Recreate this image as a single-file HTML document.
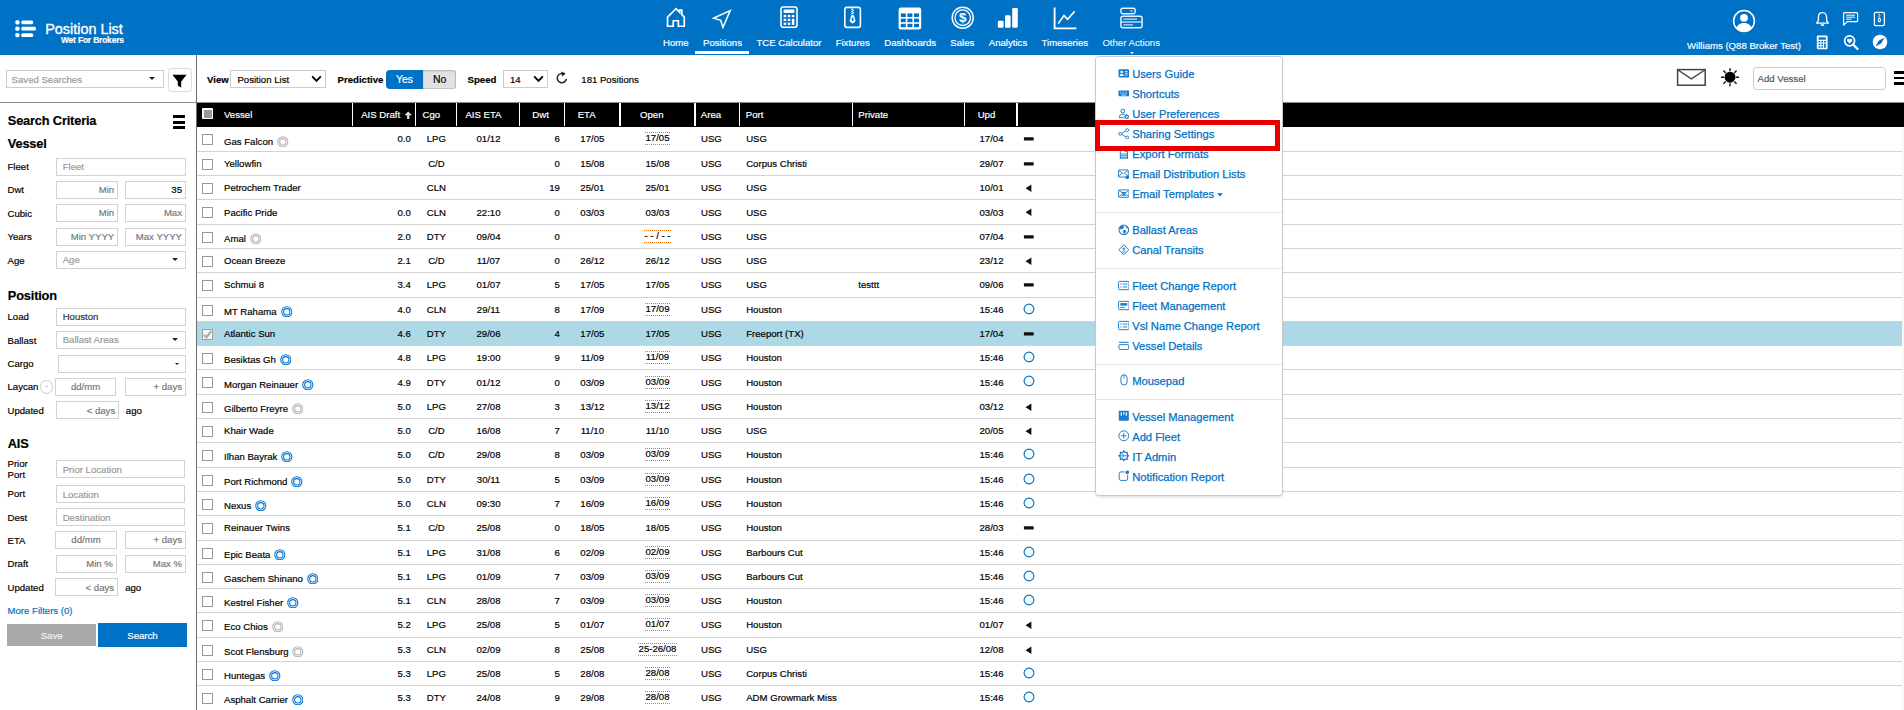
<!DOCTYPE html>
<html><head><meta charset="utf-8"><title>Position List</title>
<style>
*{box-sizing:border-box}
html,body{margin:0;padding:0}
body{width:1904px;height:710px;overflow:hidden;position:relative;background:#fff;font-family:"Liberation Sans",sans-serif;font-size:9.6px;color:#000;line-height:1;-webkit-text-stroke:0.18px}
.abs{position:absolute}
#hdr{position:absolute;left:0;top:0;width:1904px;height:55px;background:#0072c6}
.nav{position:absolute;top:0;height:55px;width:120px;margin-left:-60px;text-align:center;color:#fff}
.nav svg{position:absolute;left:50%;}
.nav span{position:absolute;left:0;width:120px;top:38px;font-size:9.6px;white-space:nowrap}
#title{position:absolute;left:45.2px;top:22.3px;color:#fff;font-size:14.4px;white-space:nowrap;letter-spacing:0px;-webkit-text-stroke:0.35px #fff}
#subtitle{position:absolute;left:61px;top:36.4px;color:#fff;font-size:8.4px;font-weight:bold;white-space:nowrap;letter-spacing:-0.15px}
#user{position:absolute;left:1644px;width:200px;top:41.1px;text-align:center;color:#fff;font-size:9.6px;white-space:nowrap}
/* toolbar */
#hline{position:absolute;left:0;top:102px;width:1904px;height:1px;background:#8c8c8c}
#vline{position:absolute;left:196px;top:55px;width:1px;height:655px;background:#6e6e6e}
.lbl{position:absolute;font-weight:bold;font-size:9.6px;white-space:nowrap}
.sel{position:absolute;border:1px solid #ccc;background:#fff;font-size:9.6px;white-space:nowrap}
/* sidebar */
.sh{position:absolute;left:7.8px;font-weight:bold;font-size:12.8px;white-space:nowrap;letter-spacing:-0.17px}
.sl{position:absolute;left:7.5px;font-size:9.6px;white-space:nowrap}
.in{position:absolute;border:1px solid #d2d2d2;background:#fff;height:17.4px;font-size:9.6px;color:#999;white-space:nowrap;line-height:15.4px;padding:0 5.5px;overflow:hidden}
.in.r{text-align:right;padding:0 2.8px;color:#777}
.in.c{text-align:center;color:#777}
.in.v{color:#000}
.caret{position:absolute;width:0;height:0;border-left:3px solid transparent;border-right:3px solid transparent;border-top:3px solid #222}
/* table */
#thead{position:absolute;left:197px;top:103px;width:1707px;height:23.6px;background:#000;color:#fff}
#thead span{position:absolute;top:6.6px;font-size:9.6px;white-space:nowrap}
#thead i{position:absolute;top:0;height:23.2px;width:1px;background:#fff}
#thead i.w{width:2px}
#rows{position:absolute;left:197px;top:127px;width:1705px}
.row{position:absolute;left:0;border-bottom:1px solid #d3d3d3;width:1705px}
.row.hl{background:#add8e6}
.row span{position:absolute;top:0;line-height:inherit;font-size:9.6px;white-space:nowrap}
.row .cb{position:absolute;left:5px;top:7px;width:11px;height:10.6px;border:1px solid #999;background:#fff;border-radius:0}
.row .v{left:27px}
.row .ad{left:155.4px;width:63px;text-align:right;padding-right:4.6px}
.row .cg{left:218.4px;width:41px;text-align:center;padding-left:1px}
.row .ae{left:259.4px;width:63.2px;text-align:center;padding-left:1px}
.row .dw{left:322.6px;width:45px;text-align:right;padding-right:4.8px}
.row .et{left:367.6px;width:54.5px;text-align:center;padding-left:1px}
.row .op{left:422.1px;width:75.8px;text-align:center;padding-left:1px}
.row .ar{left:504px}
.row .po{left:549.2px}
.row .pr{left:661.3px}
.row .up{left:767.5px;width:54px;text-align:center}
.row .op b{font-weight:normal;display:inline-block;position:relative;top:-1px;line-height:10.6px;border-top:1px dotted #ff6a00;border-bottom:1px dotted #ff6a00;padding:0 0.5px}
.row svg{position:absolute}
.row .v svg{position:static;vertical-align:-2.3px;margin-left:3.9px}
/* menu */
#menu{position:absolute;left:1095px;top:56px;width:188px;height:440px;background:#fff;border:1px solid #c9c9c9;border-radius:3.5px;box-shadow:0 2px 3px -1px rgba(0,0,0,0.15)}
#menu a{position:absolute;left:36.2px;color:#0072c6;font-size:11.2px;white-space:nowrap;text-decoration:none;-webkit-text-stroke:0.25px #0072c6}
#menu svg{position:absolute}
#menu hr{position:absolute;left:0;width:186px;height:1px;border:0;margin:0;background:#e5e5e5}
#redbox{position:absolute;left:1095px;top:120px;width:185px;height:31px;border:5px solid #e60000}
</style></head><body>
<div id="hdr">
<!-- logo list icon -->
<svg class="abs" style="left:14px;top:19px" width="24" height="20" viewBox="0 0 24 20"><g fill="#fff"><rect x="1.3" y="1.2" width="4.2" height="4.2" rx="1.6"/><rect x="1.3" y="7.6" width="4.2" height="4.2" rx="1.6"/><rect x="1.3" y="14" width="4.2" height="4.2" rx="1.6"/><rect x="7.2" y="1.4" width="12" height="3.8" rx="1.6"/><rect x="7.2" y="7.8" width="14.8" height="3.8" rx="1.6"/><rect x="7.2" y="14.2" width="12" height="3.8" rx="1.6"/></g></svg>
<div id="title">Position List</div>
<div id="subtitle">Wet For Brokers</div>

<div class="nav" style="left:675.8px"><svg style="margin-left:-10px;top:7.4px" width="20" height="21" viewBox="0 0 21 22"><path d="M10.5 1.8 L1.6 10.6 V20.2 H7.6 V14.4 H13 V20.2 H19.2 V10.6 L16.6 8 V3.2 H14.4 V5.7 Z" fill="none" stroke="#fff" stroke-width="1.75" stroke-linejoin="miter"/></svg><span>Home</span></div>
<div class="nav" style="left:722.5px"><svg style="margin-left:-11px;top:8.6px" width="20.4" height="20.4" viewBox="0 0 22 22"><path d="M19.6 1.8 L1.8 9.9 L9.4 12.2 L11.8 19.9 Z" fill="none" stroke="#fff" stroke-width="1.65" stroke-linejoin="miter"/></svg><span>Positions</span></div>
<div class="abs" style="left:695px;top:51px;width:54px;height:3px;background:#fff"></div>
<div class="nav" style="left:789px"><svg style="margin-left:-9px;top:6.3px" width="18" height="22.2" viewBox="0 0 18 23" preserveAspectRatio="none"><rect x="1" y="1" width="16" height="21" rx="2.2" fill="none" stroke="#fff" stroke-width="1.6"/><rect x="3.6" y="3.6" width="10.8" height="3.6" fill="#fff"/><g fill="#fff"><rect x="3.6" y="9.2" width="2.6" height="2.4"/><rect x="7.7" y="9.2" width="2.6" height="2.4"/><rect x="11.8" y="9.2" width="2.6" height="2.4"/><rect x="3.6" y="13.2" width="2.6" height="2.4"/><rect x="7.7" y="13.2" width="2.6" height="2.4"/><rect x="11.8" y="13.2" width="2.6" height="6.4"/><rect x="3.6" y="17.2" width="2.6" height="2.4"/><rect x="7.7" y="17.2" width="2.6" height="2.4"/></g></svg><span>TCE Calculator</span></div>
<div class="nav" style="left:852.7px"><svg style="margin-left:-9.9px;top:6.4px" width="19" height="23" viewBox="0 0 19 23"><rect x="1.8" y="1.4" width="15.6" height="20" rx="2.2" fill="none" stroke="#fff" stroke-width="1.6"/><path d="M9.6 2.2 L8.4 3.2 L10.8 4.4 L8.4 5.6 L10.8 6.8 L8.4 8 L9.6 8.8" stroke="#fff" stroke-width="1" fill="none"/><path d="M8.2 9.2 H11 L12.6 15.2 L9.6 17.8 L6.6 15.2 Z" fill="#fff"/><rect x="8.7" y="11.4" width="1.8" height="3.6" rx=".7" fill="#0072c6"/></svg><span>Fixtures</span></div>
<div class="nav" style="left:910.2px"><svg style="margin-left:-12.4px;top:6.7px" width="24" height="23" viewBox="0 0 24 23"><rect x="0.6" y="0.6" width="22.6" height="21.8" rx="2.2" fill="#fff"/><g fill="#0072c6"><rect x="2.8" y="6.4" width="5" height="3.6"/><rect x="9.4" y="6.4" width="5" height="3.6"/><rect x="16" y="6.4" width="5" height="3.6"/><rect x="2.8" y="11.6" width="5" height="3.6"/><rect x="9.4" y="11.6" width="5" height="3.6"/><rect x="16" y="11.6" width="5" height="3.6"/><rect x="2.8" y="16.8" width="5" height="3.4"/><rect x="9.4" y="16.8" width="5" height="3.4"/><rect x="16" y="16.8" width="5" height="3.4"/></g></svg><span>Dashboards</span></div>
<div class="nav" style="left:962.3px"><svg style="margin-left:-11.6px;top:6.2px" width="23.4" height="23.4" viewBox="0 0 24 24"><circle cx="12" cy="12" r="10.8" fill="none" stroke="#fff" stroke-width="1.5"/><circle cx="12" cy="12" r="8" fill="none" stroke="#fff" stroke-width="1.3"/><text x="12" y="16.9" font-family="Liberation Sans" font-size="13.6" font-weight="bold" fill="#fff" text-anchor="middle">$</text></svg><span>Sales</span></div>
<div class="nav" style="left:1008px"><svg style="margin-left:-11px;top:7px" width="22" height="22" viewBox="0 0 22 22"><g fill="#fff"><rect x="0.8" y="13.8" width="5.8" height="6.9" rx="1.2"/><rect x="8" y="8.2" width="5.6" height="12.5" rx="1.2"/><rect x="15.2" y="1" width="5.6" height="19.7" rx="1.2"/></g></svg><span>Analytics</span></div>
<div class="nav" style="left:1064.8px"><svg style="margin-left:-12px;top:6.5px" width="24" height="23" viewBox="0 0 24 23"><path d="M1.6 0.6 V21.4 H23.4" fill="none" stroke="#fff" stroke-width="1.9"/><path d="M5.2 16.6 L11 8.6 L14.6 12.4 L21.6 4.4" fill="none" stroke="#fff" stroke-width="1.6"/></svg><span>Timeseries</span></div>
<div class="nav" style="left:1131.2px"><svg style="margin-left:-12px;top:6.5px" width="24" height="23" viewBox="0 0 24 23"><g opacity=".9"><rect x="1.9" y="1.3" width="14.2" height="5.4" rx="1.7" fill="none" stroke="#fff" stroke-width="1.45"/><path d="M11.4 4 H13.6" stroke="#fff" stroke-width="1.1"/><rect x="1.9" y="9.2" width="21.2" height="11.6" rx="2" fill="none" stroke="#fff" stroke-width="1.45"/><path d="M1.9 15 H23.1" stroke="#fff" stroke-width="1.2"/><path d="M4.4 12.2 H18 M4.4 17.9 H14" stroke="#fff" stroke-width="1.2" opacity=".85"/></g></svg><span style="color:rgba(255,255,255,.88)">Other Actions</span></div>
<div class="abs" style="left:1129.6px;top:51.8px;width:0;height:0;border-left:2.2px solid transparent;border-right:2.2px solid transparent;border-top:2.2px solid #fff"></div>

<!-- user -->
<svg class="abs" style="left:1732px;top:9px" width="24" height="24" viewBox="0 0 24 24"><circle cx="12" cy="12" r="10.4" fill="none" stroke="#fff" stroke-width="1.5"/><circle cx="12" cy="8.8" r="3.9" fill="#fff"/><path d="M4.6 19.2 C5.4 15.4 8.4 14 12 14 C15.6 14 18.6 15.4 19.4 19.2 C17.6 21.4 15 22.4 12 22.4 C9 22.4 6.4 21.4 4.6 19.2 Z" fill="#fff"/></svg>
<div id="user">Williams (Q88 Broker Test)</div>
<!-- bell -->
<svg class="abs" style="left:1815px;top:11px" width="15" height="16" viewBox="0 0 15 16"><path d="M7.5 1.6 C4.6 1.6 3.4 3.8 3.4 6.4 V9.6 L1.6 12.2 H13.4 L11.6 9.6 V6.4 C11.6 3.8 10.4 1.6 7.5 1.6 Z" fill="none" stroke="#fff" stroke-width="1.3" stroke-linejoin="round"/><path d="M5.6 13.2 H9.4 A1.9 1.9 0 0 1 5.6 13.2 Z" fill="#fff"/></svg>
<!-- chat -->
<svg class="abs" style="left:1842px;top:11px" width="17" height="16" viewBox="0 0 17 16"><path d="M2.4 1.6 H14.6 A1 1 0 0 1 15.6 2.6 V9.6 A1 1 0 0 1 14.6 10.6 H5.4 L1.6 14 V2.6 A1 1 0 0 1 2.4 1.6 Z" fill="none" stroke="#fff" stroke-width="1.2" stroke-linejoin="round"/><path d="M4.2 4.2 H13 M4.2 6.2 H13 M4.2 8.2 H9.6" stroke="#fff" stroke-width="1"/></svg>
<!-- fixtures small -->
<svg class="abs" style="left:1872.6px;top:11px" width="14" height="16" viewBox="0 0 14 16"><rect x="1.4" y="1.4" width="10" height="13.2" rx="1.4" fill="none" stroke="#fff" stroke-width="1.3"/><path d="M6.4 2.6 L5.6 3.4 L7.2 4.4 L5.6 5.4 L6.4 6.2" stroke="#fff" stroke-width=".8" fill="none"/><path d="M5.5 6.6 H7.3 L8.1 10 L6.4 11.4 L4.7 10 Z" fill="#fff"/><rect x="5.9" y="7.8" width="1" height="2" fill="#0072c6"/></svg>
<!-- calc small -->
<svg class="abs" style="left:1816.4px;top:34.6px" width="13" height="15" viewBox="0 0 13 15"><rect x="0.8" y="0.5" width="10.8" height="13.8" rx="1.2" fill="#fff"/><g fill="#0072c6"><rect x="2.6" y="2.3" width="7.2" height="2.4"/><rect x="2.6" y="6" width="1.7" height="1.6"/><rect x="5.35" y="6" width="1.7" height="1.6"/><rect x="8.1" y="6" width="1.7" height="1.6"/><rect x="2.6" y="8.6" width="1.7" height="1.6"/><rect x="5.35" y="8.6" width="1.7" height="1.6"/><rect x="8.1" y="8.6" width="1.7" height="4.2"/><rect x="2.6" y="11.2" width="1.7" height="1.6"/><rect x="5.35" y="11.2" width="1.7" height="1.6"/></g></svg>
<!-- search heart -->
<svg class="abs" style="left:1843px;top:34px" width="16" height="16" viewBox="0 0 16 16"><circle cx="6.6" cy="6.8" r="5" fill="none" stroke="#fff" stroke-width="1.7"/><path d="M10.2 10.6 L14.6 15" stroke="#fff" stroke-width="2.2" stroke-linecap="round"/><path d="M6.6 9.6 L4.2 7 A1.4 1.4 0 0 1 6.6 5.4 A1.4 1.4 0 0 1 9 7 Z" fill="#fff"/></svg>
<!-- compass -->
<svg class="abs" style="left:1872px;top:34.4px" width="16" height="16" viewBox="0 0 16 16"><circle cx="8" cy="8" r="7.3" fill="#fff"/><path d="M12.4 3.4 L9.3 9.3 L3.6 12.6 L6.7 6.7 Z" fill="#0068b8"/></svg>
</div>
<div id="hline"></div><div id="vline"></div>
<!-- saved searches -->
<div class="sel" style="left:6px;top:70px;width:158px;height:18px;color:#999;line-height:17.4px;padding-left:4.6px;font-size:9.6px">Saved Searches</div>
<div class="caret" style="left:149px;top:76.6px"></div>
<div class="abs" style="left:168px;top:68px;width:24px;height:24px;border:1px solid #ddd;border-radius:3.5px;background:#fff"></div>
<svg class="abs" style="left:172.2px;top:73.6px" width="15" height="15" viewBox="0 0 15 15"><path d="M0.4 0.8 H14.6 L9.2 7.4 V13.6 L5.8 11.8 V7.4 Z" fill="#000"/></svg>

<div class="lbl" style="left:207px;top:74.6px">View</div>
<div class="sel" style="left:230px;top:70px;width:96px;height:17.8px;line-height:17.4px;padding-left:6.4px">Position List</div>
<svg class="abs" style="left:311.1px;top:75.2px" width="11" height="8" viewBox="0 0 11 8"><path d="M1.2 1.4 L5.5 5.8 L9.8 1.4" fill="none" stroke="#000" stroke-width="1.9"/></svg>
<div class="lbl" style="left:337.6px;top:74.6px">Predictive</div>
<div class="abs" style="left:386px;top:70px;width:37.2px;height:19px;background:#0072c6;border-radius:4px 0 0 4px;color:#fff;font-size:10.4px;text-align:center;line-height:20px">Yes</div>
<div class="abs" style="left:423.2px;top:70px;width:33px;height:19px;background:#e2e2e2;border-radius:0 3px 3px 0;color:#000;font-size:10.4px;text-align:center;line-height:20px;box-shadow:inset 0 1px 2px rgba(0,0,0,.22), inset -1px -1px 0 rgba(0,0,0,.12)">No</div>
<div class="lbl" style="left:467.6px;top:74.6px">Speed</div>
<div class="sel" style="left:503px;top:70px;width:45px;height:17.8px;line-height:17.4px;padding-left:6px">14</div>
<svg class="abs" style="left:533.1px;top:75.2px" width="11" height="8" viewBox="0 0 11 8"><path d="M1.2 1.4 L5.5 5.8 L9.8 1.4" fill="none" stroke="#000" stroke-width="1.9"/></svg>
<!-- refresh -->
<svg class="abs" style="left:555px;top:71px" width="14" height="14" viewBox="0 0 14 14"><path d="M9.6 3.4 A4.6 4.6 0 1 0 11.4 7.8" fill="none" stroke="#222" stroke-width="1.5"/><path d="M6.4 0.4 L10.6 2.6 L7 5.6 Z" fill="#222"/></svg>
<div class="abs" style="left:581.3px;top:74.6px;font-size:9.6px;white-space:nowrap">181 Positions</div>

<!-- envelope -->
<svg class="abs" style="left:1676px;top:68px" width="31" height="19" viewBox="0 0 31 19"><rect x="1.6" y="1.6" width="27.6" height="15.6" fill="#fff" stroke="#444" stroke-width="1.5"/><path d="M2 2 L15.4 10.8 L28.8 2" fill="none" stroke="#444" stroke-width="1.4"/></svg>
<!-- sun -->
<svg class="abs" style="left:1719px;top:66px" width="22" height="22" viewBox="0 0 22 22"><circle cx="11" cy="11.2" r="5.5" fill="#000"/><g stroke="#1a1a1a" stroke-width="1.45"><path d="M11 2.2 V5.2 M11 17.2 V20.2 M2 11.2 H5 M17 11.2 H20 M4.4 4.6 L6.8 7 M15.2 15.4 L17.6 17.8 M4.4 17.8 L6.8 15.4 M15.2 7 L17.6 4.6"/></g></svg>
<div class="abs" style="left:1753px;top:67.2px;width:133px;height:22.4px;border:1px solid #ccc;border-radius:3.5px;background:#fff;color:#555;font-size:9.6px;line-height:21.6px;padding-left:3.6px">Add Vessel</div>
<div class="abs" style="left:1894px;top:71.2px;width:12px;height:2.8px;background:#000"></div>
<div class="abs" style="left:1894px;top:76.7px;width:12px;height:2.8px;background:#000"></div>
<div class="abs" style="left:1894px;top:82.2px;width:12px;height:2.8px;background:#000"></div>
<div class="sh" style="top:115.3px">Search Criteria</div>
<div class="abs" style="left:172.8px;top:115.4px;width:12.6px;height:2.9px;background:#000"></div>
<div class="abs" style="left:172.8px;top:120.7px;width:12.6px;height:2.9px;background:#000"></div>
<div class="abs" style="left:172.8px;top:126px;width:12.6px;height:2.9px;background:#000"></div>
<div class="sh" style="top:137.5px">Vessel</div>
<div class="sl" style="top:162px">Fleet</div><div class="in" style="left:56.2px;top:158.2px;width:129.6px">Fleet</div>
<div class="sl" style="top:185.2px">Dwt</div><div class="in r" style="left:56.2px;top:181.4px;width:61.8px">Min</div><div class="in r v" style="left:125px;top:181.4px;width:60.8px">35</div>
<div class="sl" style="top:209px">Cubic</div><div class="in r" style="left:56.2px;top:204.4px;width:61.8px">Min</div><div class="in r" style="left:125px;top:204.4px;width:60.8px">Max</div>
<div class="sl" style="top:232.2px">Years</div><div class="in r" style="left:56.2px;top:228.4px;width:61.8px">Min YYYY</div><div class="in r" style="left:125px;top:228.4px;width:60.8px">Max YYYY</div>
<div class="sl" style="top:255.6px">Age</div><div class="in" style="left:56.2px;top:251.1px;width:129.6px;height:17.8px">Age</div><div class="caret" style="left:171.6px;top:258px"></div>

<div class="sh" style="top:290.3px">Position</div>
<div class="sl" style="top:312px">Load</div><div class="in" style="left:56.2px;top:308.2px;width:129.6px;color:#333">Houston</div>
<div class="sl" style="top:335.6px">Ballast</div><div class="in" style="left:56.2px;top:331.1px;width:129.6px;height:17.8px">Ballast Areas</div><div class="caret" style="left:171.6px;top:338px"></div>
<div class="sl" style="top:359px">Cargo</div><div class="in" style="left:58.2px;top:355.2px;width:127.6px"></div><div class="caret" style="left:175.2px;top:362.6px;border-width:2.8px 2.1px 0 2.1px"></div>
<div class="sl" style="top:382.4px">Laycan</div>
<div class="abs" style="left:40.2px;top:380.4px;width:13.2px;height:13.2px;border:1px solid #ccc;border-radius:50%;color:#999;font-size:8px;text-align:center;line-height:10px">-</div>
<div class="in c" style="left:55.2px;top:378.4px;width:60.8px">dd/mm</div><div class="in r" style="left:125px;top:378.4px;width:60.8px">+ days</div>
<div class="sl" style="top:405.8px">Updated</div><div class="in r" style="left:56.2px;top:401.4px;width:62.8px;padding-top:0.8px">&lt; days</div><div class="sl" style="left:125.8px;top:405.8px">ago</div>

<div class="sh" style="top:437.6px">AIS</div>
<div class="sl" style="top:459.2px;line-height:10.4px">Prior<br>Port</div><div class="in" style="left:56.2px;top:460.3px;width:128.8px;padding-top:0.9px">Prior Location</div>
<div class="sl" style="top:489px">Port</div><div class="in" style="left:56.2px;top:485.4px;width:128.8px;padding-top:0.9px">Location</div>
<div class="sl" style="top:512.8px">Dest</div><div class="in" style="left:56.2px;top:508.2px;width:128.8px;padding-top:0.7px">Destination</div>
<div class="sl" style="top:535.8px">ETA</div><div class="in c" style="left:55.3px;top:531.1px;width:61.4px;height:18px;line-height:16.8px">dd/mm</div><div class="in r" style="left:125px;top:531.1px;width:60.8px;height:18px;line-height:16.8px">+ days</div>
<div class="sl" style="top:559px">Draft</div><div class="in r" style="left:56.2px;top:555.2px;width:60.5px">Min %</div><div class="in r" style="left:125px;top:555.2px;width:60.8px">Max %</div>
<div class="sl" style="top:583px">Updated</div><div class="in r" style="left:55.3px;top:578.1px;width:62.6px;height:17.8px;padding-top:0.8px">&lt; days</div><div class="sl" style="left:125.2px;top:583px">ago</div>
<div class="sl" style="top:606px;color:#0072c6">More Filters (0)</div>
<div class="abs" style="left:7px;top:624px;width:89.2px;height:22px;background:#a9a9a9;color:rgba(255,255,255,.85);text-align:center;line-height:23px;font-size:9.6px">Save</div>
<div class="abs" style="left:98px;top:623px;width:89px;height:23.8px;background:#0072c6;color:#fff;text-align:center;line-height:23.8px;padding-top:1px;font-size:9.6px">Search</div>
<div id="thead">
<div class="abs" style="left:5.4px;top:5.4px;width:11px;height:11px;background:#fff;border-radius:1px"></div><div class="abs" style="left:7.2px;top:7.2px;width:7.4px;height:7.4px;background:#9a9a9a"></div>
<span style="left:27px">Vessel</span>
<span style="left:164.2px">AIS Draft</span>
<span style="left:225.6px">Cgo</span>
<span style="left:268.4px">AIS ETA</span>
<span style="left:335.3px">Dwt</span>
<span style="left:380.7px">ETA</span>
<span style="left:443px">Open</span>
<span style="left:503.8px">Area</span>
<span style="left:548.8px">Port</span>
<span style="left:661.3px">Private</span>
<span style="left:780.7px">Upd</span>
<svg class="abs" style="left:206.8px;top:7.6px" width="8.4" height="8.6" viewBox="0 0 8 8"><path d="M4 0.3 L7.6 3.9 H5.1 V7.7 H2.9 V3.9 H0.4 Z" fill="#e0e0e0"/></svg>
<i style="left:155px"></i>
<i style="left:218px"></i>
<i style="left:259px"></i>
<i style="left:322.4px"></i>
<i style="left:367.4px"></i>
<i class="w" style="left:421.6px"></i>
<i class="w" style="left:497.4px"></i>
<i style="left:542.4px"></i>
<i style="left:655.2px"></i>
<i style="left:767.2px"></i>
<i class="w" style="left:819.4px"></i>
</div>
<div id="rows">
<div class="row" style="top:0px;height:25px;line-height:24.0px"><div class="cb"></div><span class="v" style="line-height:29.5px">Gas Falcon<svg width="11.6" height="11.6" viewBox="0 0 12 12"><circle cx="6" cy="6" r="5.25" fill="none" stroke="#b4b4b4" stroke-width="1.08"/><circle cx="6" cy="6" r="3.3" fill="none" stroke="#b4b4b4" stroke-width="1.08"/></svg></span><span class="ad">0.0</span><span class="cg">LPG</span><span class="ae">01/12</span><span class="dw">6</span><span class="et">17/05</span><span class="op"><b>17/05</b></span><span class="ar">USG</span><span class="po">USG</span><span class="pr"></span><span class="up">17/04</span><svg style="left:826px;top:10.4px" width="11" height="4" viewBox="0 0 11 4"><rect x="0.9" y="0.3" width="9.8" height="3.3" rx="0.5" fill="#111"/></svg></div>
<div class="row" style="top:25px;height:24px;line-height:24.0px"><div class="cb"></div><span class="v">Yellowfin</span><span class="ad"></span><span class="cg">C/D</span><span class="ae"></span><span class="dw">0</span><span class="et">15/08</span><span class="op">15/08</span><span class="ar">USG</span><span class="po">Corpus Christi</span><span class="pr"></span><span class="up">29/07</span><svg style="left:826px;top:10.4px" width="11" height="4" viewBox="0 0 11 4"><rect x="0.9" y="0.3" width="9.8" height="3.3" rx="0.5" fill="#111"/></svg></div>
<div class="row" style="top:49px;height:24px;line-height:24.0px"><div class="cb"></div><span class="v">Petrochem Trader</span><span class="ad"></span><span class="cg">CLN</span><span class="ae"></span><span class="dw">19</span><span class="et">25/01</span><span class="op">25/01</span><span class="ar">USG</span><span class="po">USG</span><span class="pr"></span><span class="up">10/01</span><svg style="left:828.2px;top:7.6px" width="7" height="9" viewBox="0 0 7 9"><path d="M6.4 0.5 V8.1 L0.5 4.3 Z" fill="#111"/></svg></div>
<div class="row" style="top:73px;height:25px;line-height:25.0px"><div class="cb"></div><span class="v">Pacific Pride</span><span class="ad">0.0</span><span class="cg">CLN</span><span class="ae">22:10</span><span class="dw">0</span><span class="et">03/03</span><span class="op">03/03</span><span class="ar">USG</span><span class="po">USG</span><span class="pr"></span><span class="up">03/03</span><svg style="left:828.2px;top:7.6px" width="7" height="9" viewBox="0 0 7 9"><path d="M6.4 0.5 V8.1 L0.5 4.3 Z" fill="#111"/></svg></div>
<div class="row" style="top:98px;height:24px;line-height:24.0px"><div class="cb"></div><span class="v" style="line-height:28.0px">Amal<svg width="11.6" height="11.6" viewBox="0 0 12 12"><circle cx="6" cy="6" r="5.25" fill="none" stroke="#b4b4b4" stroke-width="1.08"/><circle cx="6" cy="6" r="3.3" fill="none" stroke="#b4b4b4" stroke-width="1.08"/></svg></span><span class="ad">2.0</span><span class="cg">DTY</span><span class="ae">09/04</span><span class="dw">0</span><span class="et"></span><span class="op"><b>- - / - -</b></span><span class="ar">USG</span><span class="po">USG</span><span class="pr"></span><span class="up">07/04</span><svg style="left:826px;top:10.4px" width="11" height="4" viewBox="0 0 11 4"><rect x="0.9" y="0.3" width="9.8" height="3.3" rx="0.5" fill="#111"/></svg></div>
<div class="row" style="top:122px;height:24px;line-height:24.0px"><div class="cb"></div><span class="v">Ocean Breeze</span><span class="ad">2.1</span><span class="cg">C/D</span><span class="ae">11/07</span><span class="dw">0</span><span class="et">26/12</span><span class="op">26/12</span><span class="ar">USG</span><span class="po">USG</span><span class="pr"></span><span class="up">23/12</span><svg style="left:828.2px;top:7.6px" width="7" height="9" viewBox="0 0 7 9"><path d="M6.4 0.5 V8.1 L0.5 4.3 Z" fill="#111"/></svg></div>
<div class="row" style="top:146px;height:25px;line-height:24.0px"><div class="cb"></div><span class="v">Schmui 8</span><span class="ad">3.4</span><span class="cg">LPG</span><span class="ae">01/07</span><span class="dw">5</span><span class="et">17/05</span><span class="op">17/05</span><span class="ar">USG</span><span class="po">USG</span><span class="pr">testtt</span><span class="up">09/06</span><svg style="left:826px;top:10.4px" width="11" height="4" viewBox="0 0 11 4"><rect x="0.9" y="0.3" width="9.8" height="3.3" rx="0.5" fill="#111"/></svg></div>
<div class="row" style="top:171px;height:24px;line-height:24.0px"><div class="cb"></div><span class="v" style="line-height:28.0px">MT Rahama<svg width="11.6" height="11.6" viewBox="0 0 12 12"><circle cx="6" cy="6" r="5.25" fill="none" stroke="#0674d0" stroke-width="1.08"/><circle cx="6" cy="6" r="3.3" fill="none" stroke="#0674d0" stroke-width="1.08"/></svg></span><span class="ad">4.0</span><span class="cg">CLN</span><span class="ae">29/11</span><span class="dw">8</span><span class="et">17/09</span><span class="op"><b>17/09</b></span><span class="ar">USG</span><span class="po">Houston</span><span class="pr"></span><span class="up">15:46</span><svg style="left:825.5px;top:5.1px" width="12" height="12" viewBox="0 0 12 12"><circle cx="6" cy="6" r="4.9" fill="none" stroke="#0072c6" stroke-width="1.15"/></svg></div>
<div class="row hl" style="top:195px;height:24px;line-height:24.0px"><div class="cb" style="background:#f6f6f6;border-color:#9d9d9d;height:11px"><svg style="left:0.4px;top:0.4px" width="9" height="9" viewBox="0 0 9 9"><path d="M1 4.8 L3.4 7.4 L8.2 1.2" fill="none" stroke="#a6a6a6" stroke-width="2"/></svg></div><span class="v">Atlantic Sun</span><span class="ad">4.6</span><span class="cg">DTY</span><span class="ae">29/06</span><span class="dw">4</span><span class="et">17/05</span><span class="op">17/05</span><span class="ar">USG</span><span class="po">Freeport (TX)</span><span class="pr"></span><span class="up">17/04</span><svg style="left:826px;top:10.4px" width="11" height="4" viewBox="0 0 11 4"><rect x="0.9" y="0.3" width="9.8" height="3.3" rx="0.5" fill="#111"/></svg></div>
<div class="row" style="top:219px;height:24px;line-height:24.0px"><div class="cb"></div><span class="v" style="line-height:28.0px">Besiktas Gh<svg width="11.6" height="11.6" viewBox="0 0 12 12"><circle cx="6" cy="6" r="5.25" fill="none" stroke="#0674d0" stroke-width="1.08"/><circle cx="6" cy="6" r="3.3" fill="none" stroke="#0674d0" stroke-width="1.08"/></svg></span><span class="ad">4.8</span><span class="cg">LPG</span><span class="ae">19:00</span><span class="dw">9</span><span class="et">11/09</span><span class="op"><b>11/09</b></span><span class="ar">USG</span><span class="po">Houston</span><span class="pr"></span><span class="up">15:46</span><svg style="left:825.5px;top:5.1px" width="12" height="12" viewBox="0 0 12 12"><circle cx="6" cy="6" r="4.9" fill="none" stroke="#0072c6" stroke-width="1.15"/></svg></div>
<div class="row" style="top:243px;height:25px;line-height:25.0px"><div class="cb"></div><span class="v" style="line-height:29.0px">Morgan Reinauer<svg width="11.6" height="11.6" viewBox="0 0 12 12"><circle cx="6" cy="6" r="5.25" fill="none" stroke="#0674d0" stroke-width="1.08"/><circle cx="6" cy="6" r="3.3" fill="none" stroke="#0674d0" stroke-width="1.08"/></svg></span><span class="ad">4.9</span><span class="cg">DTY</span><span class="ae">01/12</span><span class="dw">0</span><span class="et">03/09</span><span class="op"><b>03/09</b></span><span class="ar">USG</span><span class="po">Houston</span><span class="pr"></span><span class="up">15:46</span><svg style="left:825.5px;top:5.1px" width="12" height="12" viewBox="0 0 12 12"><circle cx="6" cy="6" r="4.9" fill="none" stroke="#0072c6" stroke-width="1.15"/></svg></div>
<div class="row" style="top:268px;height:24px;line-height:24.0px"><div class="cb"></div><span class="v" style="line-height:28.0px">Gilberto Freyre<svg width="11.6" height="11.6" viewBox="0 0 12 12"><circle cx="6" cy="6" r="5.25" fill="none" stroke="#b4b4b4" stroke-width="1.08"/><circle cx="6" cy="6" r="3.3" fill="none" stroke="#b4b4b4" stroke-width="1.08"/></svg></span><span class="ad">5.0</span><span class="cg">LPG</span><span class="ae">27/08</span><span class="dw">3</span><span class="et">13/12</span><span class="op"><b>13/12</b></span><span class="ar">USG</span><span class="po">Houston</span><span class="pr"></span><span class="up">03/12</span><svg style="left:828.2px;top:7.6px" width="7" height="9" viewBox="0 0 7 9"><path d="M6.4 0.5 V8.1 L0.5 4.3 Z" fill="#111"/></svg></div>
<div class="row" style="top:292px;height:24px;line-height:24.0px"><div class="cb"></div><span class="v">Khair Wade</span><span class="ad">5.0</span><span class="cg">C/D</span><span class="ae">16/08</span><span class="dw">7</span><span class="et">11/10</span><span class="op">11/10</span><span class="ar">USG</span><span class="po">USG</span><span class="pr"></span><span class="up">20/05</span><svg style="left:828.2px;top:7.6px" width="7" height="9" viewBox="0 0 7 9"><path d="M6.4 0.5 V8.1 L0.5 4.3 Z" fill="#111"/></svg></div>
<div class="row" style="top:316px;height:25px;line-height:24.0px"><div class="cb"></div><span class="v" style="line-height:28.0px">Ilhan Bayrak<svg width="11.6" height="11.6" viewBox="0 0 12 12"><circle cx="6" cy="6" r="5.25" fill="none" stroke="#0674d0" stroke-width="1.08"/><circle cx="6" cy="6" r="3.3" fill="none" stroke="#0674d0" stroke-width="1.08"/></svg></span><span class="ad">5.0</span><span class="cg">C/D</span><span class="ae">29/08</span><span class="dw">8</span><span class="et">03/09</span><span class="op"><b>03/09</b></span><span class="ar">USG</span><span class="po">Houston</span><span class="pr"></span><span class="up">15:46</span><svg style="left:825.5px;top:5.1px" width="12" height="12" viewBox="0 0 12 12"><circle cx="6" cy="6" r="4.9" fill="none" stroke="#0072c6" stroke-width="1.15"/></svg></div>
<div class="row" style="top:341px;height:24px;line-height:24.0px"><div class="cb"></div><span class="v" style="line-height:28.0px">Port Richmond<svg width="11.6" height="11.6" viewBox="0 0 12 12"><circle cx="6" cy="6" r="5.25" fill="none" stroke="#0674d0" stroke-width="1.08"/><circle cx="6" cy="6" r="3.3" fill="none" stroke="#0674d0" stroke-width="1.08"/></svg></span><span class="ad">5.0</span><span class="cg">DTY</span><span class="ae">30/11</span><span class="dw">5</span><span class="et">03/09</span><span class="op"><b>03/09</b></span><span class="ar">USG</span><span class="po">Houston</span><span class="pr"></span><span class="up">15:46</span><svg style="left:825.5px;top:5.1px" width="12" height="12" viewBox="0 0 12 12"><circle cx="6" cy="6" r="4.9" fill="none" stroke="#0072c6" stroke-width="1.15"/></svg></div>
<div class="row" style="top:365px;height:24px;line-height:24.0px"><div class="cb"></div><span class="v" style="line-height:28.0px">Nexus<svg width="11.6" height="11.6" viewBox="0 0 12 12"><circle cx="6" cy="6" r="5.25" fill="none" stroke="#0674d0" stroke-width="1.08"/><circle cx="6" cy="6" r="3.3" fill="none" stroke="#0674d0" stroke-width="1.08"/></svg></span><span class="ad">5.0</span><span class="cg">CLN</span><span class="ae">09:30</span><span class="dw">7</span><span class="et">16/09</span><span class="op"><b>16/09</b></span><span class="ar">USG</span><span class="po">Houston</span><span class="pr"></span><span class="up">15:46</span><svg style="left:825.5px;top:5.1px" width="12" height="12" viewBox="0 0 12 12"><circle cx="6" cy="6" r="4.9" fill="none" stroke="#0072c6" stroke-width="1.15"/></svg></div>
<div class="row" style="top:389px;height:25px;line-height:24.0px"><div class="cb"></div><span class="v">Reinauer Twins</span><span class="ad">5.1</span><span class="cg">C/D</span><span class="ae">25/08</span><span class="dw">0</span><span class="et">18/05</span><span class="op">18/05</span><span class="ar">USG</span><span class="po">Houston</span><span class="pr"></span><span class="up">28/03</span><svg style="left:826px;top:10.4px" width="11" height="4" viewBox="0 0 11 4"><rect x="0.9" y="0.3" width="9.8" height="3.3" rx="0.5" fill="#111"/></svg></div>
<div class="row" style="top:414px;height:24px;line-height:24.0px"><div class="cb"></div><span class="v" style="line-height:28.0px">Epic Beata<svg width="11.6" height="11.6" viewBox="0 0 12 12"><circle cx="6" cy="6" r="5.25" fill="none" stroke="#0674d0" stroke-width="1.08"/><circle cx="6" cy="6" r="3.3" fill="none" stroke="#0674d0" stroke-width="1.08"/></svg></span><span class="ad">5.1</span><span class="cg">LPG</span><span class="ae">31/08</span><span class="dw">6</span><span class="et">02/09</span><span class="op"><b>02/09</b></span><span class="ar">USG</span><span class="po">Barbours Cut</span><span class="pr"></span><span class="up">15:46</span><svg style="left:825.5px;top:5.1px" width="12" height="12" viewBox="0 0 12 12"><circle cx="6" cy="6" r="4.9" fill="none" stroke="#0072c6" stroke-width="1.15"/></svg></div>
<div class="row" style="top:438px;height:24px;line-height:24.0px"><div class="cb"></div><span class="v" style="line-height:28.0px">Gaschem Shinano<svg width="11.6" height="11.6" viewBox="0 0 12 12"><circle cx="6" cy="6" r="5.25" fill="none" stroke="#0674d0" stroke-width="1.08"/><circle cx="6" cy="6" r="3.3" fill="none" stroke="#0674d0" stroke-width="1.08"/></svg></span><span class="ad">5.1</span><span class="cg">LPG</span><span class="ae">01/09</span><span class="dw">7</span><span class="et">03/09</span><span class="op"><b>03/09</b></span><span class="ar">USG</span><span class="po">Barbours Cut</span><span class="pr"></span><span class="up">15:46</span><svg style="left:825.5px;top:5.1px" width="12" height="12" viewBox="0 0 12 12"><circle cx="6" cy="6" r="4.9" fill="none" stroke="#0072c6" stroke-width="1.15"/></svg></div>
<div class="row" style="top:462px;height:24px;line-height:24.0px"><div class="cb"></div><span class="v" style="line-height:28.0px">Kestrel Fisher<svg width="11.6" height="11.6" viewBox="0 0 12 12"><circle cx="6" cy="6" r="5.25" fill="none" stroke="#0674d0" stroke-width="1.08"/><circle cx="6" cy="6" r="3.3" fill="none" stroke="#0674d0" stroke-width="1.08"/></svg></span><span class="ad">5.1</span><span class="cg">CLN</span><span class="ae">28/08</span><span class="dw">7</span><span class="et">03/09</span><span class="op"><b>03/09</b></span><span class="ar">USG</span><span class="po">Houston</span><span class="pr"></span><span class="up">15:46</span><svg style="left:825.5px;top:5.1px" width="12" height="12" viewBox="0 0 12 12"><circle cx="6" cy="6" r="4.9" fill="none" stroke="#0072c6" stroke-width="1.15"/></svg></div>
<div class="row" style="top:486px;height:25px;line-height:24.0px"><div class="cb"></div><span class="v" style="line-height:28.0px">Eco Chios<svg width="11.6" height="11.6" viewBox="0 0 12 12"><circle cx="6" cy="6" r="5.25" fill="none" stroke="#b4b4b4" stroke-width="1.08"/><circle cx="6" cy="6" r="3.3" fill="none" stroke="#b4b4b4" stroke-width="1.08"/></svg></span><span class="ad">5.2</span><span class="cg">LPG</span><span class="ae">25/08</span><span class="dw">5</span><span class="et">01/07</span><span class="op"><b>01/07</b></span><span class="ar">USG</span><span class="po">Houston</span><span class="pr"></span><span class="up">01/07</span><svg style="left:828.2px;top:7.6px" width="7" height="9" viewBox="0 0 7 9"><path d="M6.4 0.5 V8.1 L0.5 4.3 Z" fill="#111"/></svg></div>
<div class="row" style="top:511px;height:24px;line-height:24.0px"><div class="cb"></div><span class="v" style="line-height:28.0px">Scot Flensburg<svg width="11.6" height="11.6" viewBox="0 0 12 12"><circle cx="6" cy="6" r="5.25" fill="none" stroke="#b4b4b4" stroke-width="1.08"/><circle cx="6" cy="6" r="3.3" fill="none" stroke="#b4b4b4" stroke-width="1.08"/></svg></span><span class="ad">5.3</span><span class="cg">CLN</span><span class="ae">02/09</span><span class="dw">8</span><span class="et">25/08</span><span class="op"><b>25-26/08</b></span><span class="ar">USG</span><span class="po">USG</span><span class="pr"></span><span class="up">12/08</span><svg style="left:828.2px;top:7.6px" width="7" height="9" viewBox="0 0 7 9"><path d="M6.4 0.5 V8.1 L0.5 4.3 Z" fill="#111"/></svg></div>
<div class="row" style="top:535px;height:24px;line-height:24.0px"><div class="cb"></div><span class="v" style="line-height:28.0px">Huntegas<svg width="11.6" height="11.6" viewBox="0 0 12 12"><circle cx="6" cy="6" r="5.25" fill="none" stroke="#0674d0" stroke-width="1.08"/><circle cx="6" cy="6" r="3.3" fill="none" stroke="#0674d0" stroke-width="1.08"/></svg></span><span class="ad">5.3</span><span class="cg">LPG</span><span class="ae">25/08</span><span class="dw">5</span><span class="et">28/08</span><span class="op"><b>28/08</b></span><span class="ar">USG</span><span class="po">Corpus Christi</span><span class="pr"></span><span class="up">15:46</span><svg style="left:825.5px;top:5.1px" width="12" height="12" viewBox="0 0 12 12"><circle cx="6" cy="6" r="4.9" fill="none" stroke="#0072c6" stroke-width="1.15"/></svg></div>
<div class="row" style="top:559px;height:25px;line-height:24.0px"><div class="cb"></div><span class="v" style="line-height:28.0px">Asphalt Carrier<svg width="11.6" height="11.6" viewBox="0 0 12 12"><circle cx="6" cy="6" r="5.25" fill="none" stroke="#0674d0" stroke-width="1.08"/><circle cx="6" cy="6" r="3.3" fill="none" stroke="#0674d0" stroke-width="1.08"/></svg></span><span class="ad">5.3</span><span class="cg">DTY</span><span class="ae">24/08</span><span class="dw">9</span><span class="et">29/08</span><span class="op"><b>28/08</b></span><span class="ar">USG</span><span class="po">ADM Growmark Miss</span><span class="pr"></span><span class="up">15:46</span><svg style="left:825.5px;top:5.1px" width="12" height="12" viewBox="0 0 12 12"><circle cx="6" cy="6" r="4.9" fill="none" stroke="#0072c6" stroke-width="1.15"/></svg></div>
</div>
<div id="menu">
<svg style="left:21.5px;top:10.8px" width="11.6" height="11.6" viewBox="0 0 12 12"><rect x="0.5" y="1.2" width="11" height="8.6" rx="1.2" fill="#1a7ccc"/><circle cx="3.8" cy="4.2" r="1.3" fill="#fff"/><path d="M1.6 8.4 C1.8 6.6 2.8 6.1 3.8 6.1 C4.8 6.1 5.8 6.6 6 8.4 Z" fill="#fff"/><path d="M7 3.6 H10 M7 5.4 H10 M7 7.2 H10" stroke="#fff" stroke-width=".8"/></svg><a style="top:12.2px">Users Guide</a>
<svg style="left:21.5px;top:30.8px" width="11.6" height="11.6" viewBox="0 0 12 12"><rect x="0.5" y="2.6" width="11" height="6" rx="0.8" fill="#1a7ccc"/><path d="M2 4.3 H10 M2 5.6 H10" stroke="#cfe3f4" stroke-width=".7" stroke-dasharray="1 .6"/><path d="M3.4 7.3 H8.6" stroke="#fff" stroke-width=".8"/></svg><a style="top:32.2px">Shortcuts</a>
<svg style="left:21.5px;top:50.8px" width="11.6" height="11.6" viewBox="0 0 12 12"><circle cx="5" cy="3.2" r="2" fill="none" stroke="#1a7ccc" stroke-width="1"/><path d="M1.4 10 C1.4 7.4 3 6.4 5 6.4 C5.8 6.4 6.4 6.5 7 6.8" fill="none" stroke="#1a7ccc" stroke-width="1"/><path d="M1.4 10 H6" stroke="#1a7ccc" stroke-width="1"/><circle cx="9" cy="9" r="1.7" fill="none" stroke="#1a7ccc" stroke-width="1.3"/><path d="M9 6.4 V7.2 M9 10.8 V11.6 M6.4 9 H7.2 M10.8 9 H11.6" stroke="#1a7ccc" stroke-width="1"/></svg><a style="top:52.2px">User Preferences</a>
<svg style="left:21.5px;top:70.8px" width="11.6" height="11.6" viewBox="0 0 12 12"><path d="M8.8 2.6 L3 6 L8.8 9.6" fill="none" stroke="#1a7ccc" stroke-width=".95"/><circle cx="9.6" cy="2.2" r="1.5" fill="#fff" stroke="#1a7ccc" stroke-width=".95"/><circle cx="2.3" cy="6" r="1.5" fill="#fff" stroke="#1a7ccc" stroke-width=".95"/><circle cx="9.6" cy="9.8" r="1.5" fill="#fff" stroke="#1a7ccc" stroke-width=".95"/></svg><a style="top:72.2px">Sharing Settings</a>
<svg style="left:21.5px;top:90.8px" width="11.6" height="11.6" viewBox="0 0 12 12"><path d="M2.4 0.8 H7 L9.8 3.6 V11.2 H2.4 Z" fill="none" stroke="#1a7ccc" stroke-width="1"/><path d="M7 0.8 V3.6 H9.8" fill="none" stroke="#1a7ccc" stroke-width=".8"/><path d="M2.4 6.2 H9.8 M2.4 8 H9.8 M2.4 9.6 H9.8" stroke="#1a7ccc" stroke-width=".9"/></svg><a style="top:92.2px">Export Formats</a>
<svg style="left:21.5px;top:110.8px" width="11.6" height="11.6" viewBox="0 0 12 12"><rect x="0.6" y="2" width="10" height="7.4" rx=".6" fill="none" stroke="#1a7ccc" stroke-width="1"/><path d="M0.8 2.4 L5.6 6 L10.4 2.4 M0.8 9 L4 5.4 M10.4 9 L7.2 5.4" fill="none" stroke="#1a7ccc" stroke-width=".9"/><circle cx="9.6" cy="9.6" r="1.9" fill="#1a7ccc"/></svg><a style="top:112.2px">Email Distribution Lists</a>
<svg style="left:21.5px;top:130.8px" width="11.6" height="11.6" viewBox="0 0 12 12"><rect x="0.6" y="2" width="10.8" height="7.6" rx=".8" fill="none" stroke="#1a7ccc" stroke-width="1"/><path d="M1 2.4 L6 6.2 L11 2.4 M1 9.2 L4.4 5.6 M11 9.2 L7.6 5.6" fill="none" stroke="#1a7ccc" stroke-width=".9"/><path d="M3.4 4.2 H8.6 L6 6.4 Z M3.2 8 H8.8 L6 5.8 Z" fill="#1a7ccc"/></svg><a style="top:132.2px">Email Templates</a>
<svg style="left:121.4px;top:136.4px" width="6" height="4" viewBox="0 0 6 4"><path d="M0.2 0.3 H5.8 L3 3.6 Z" fill="#0072c6"/></svg>
<svg style="left:21.5px;top:166.8px" width="11.6" height="11.6" viewBox="0 0 12 12"><circle cx="6" cy="6" r="5" fill="#fff" stroke="#1a7ccc" stroke-width="1.1"/><path d="M2.6 2.4 C4.2 1.4 6 1.6 6.4 2.6 C6.8 3.8 5.4 4.2 4.8 5 C4.2 5.8 3 5.4 1.6 5.2 C1.6 4 2 3 2.6 2.4 Z M5.6 6.4 C7 5.8 8.6 6.4 8.4 7.6 C8.2 8.8 7.2 9.8 6.4 10.4 C5.6 9.6 4.8 7 5.6 6.4 Z M8 2 C9.2 2.6 10 3.6 10.4 4.8 C9.2 5 8 4 8 2 Z" fill="#1a7ccc"/></svg><a style="top:168.2px">Ballast Areas</a>
<svg style="left:21.5px;top:186.8px" width="11.6" height="11.6" viewBox="0 0 12 12"><path d="M6 0.8 L11.2 6 L6 11.2 L0.8 6 Z" fill="none" stroke="#1a7ccc" stroke-width="1" stroke-linejoin="round"/><path d="M6 3.2 V7.4 M4.4 5 H7.6 M4.2 7.6 C4.8 8.8 7.2 8.8 7.8 7.6" fill="none" stroke="#1a7ccc" stroke-width=".9"/></svg><a style="top:188.2px">Canal Transits</a>
<svg style="left:21.5px;top:222.8px" width="11.6" height="11.6" viewBox="0 0 12 12"><rect x="0.6" y="1.4" width="10.8" height="8.6" rx="1" fill="none" stroke="#1a7ccc" stroke-width="1"/><path d="M2.4 4.2 H3.6 M5 4.2 H9.6 M2.4 7.2 H3.6 M5 7.2 H9.6" stroke="#1a7ccc" stroke-width="1"/></svg><a style="top:224.2px">Fleet Change Report</a>
<svg style="left:21.5px;top:242.8px" width="11.6" height="11.6" viewBox="0 0 12 12"><rect x="0.6" y="1.4" width="10.8" height="8.6" rx="1" fill="none" stroke="#1a7ccc" stroke-width="1"/><rect x="2.4" y="3.2" width="7.2" height="2.6" fill="#1a7ccc"/><path d="M2.4 7.6 H7" stroke="#1a7ccc" stroke-width="1"/></svg><a style="top:244.2px">Fleet Management</a>
<svg style="left:21.5px;top:262.8px" width="11.6" height="11.6" viewBox="0 0 12 12"><rect x="0.6" y="1.4" width="10.8" height="8.6" rx="1" fill="none" stroke="#1a7ccc" stroke-width="1"/><path d="M2.4 4.2 H3.6 M5 4.2 H9.6 M2.4 7.2 H3.6 M5 7.2 H9.6" stroke="#1a7ccc" stroke-width="1"/></svg><a style="top:264.2px">Vsl Name Change Report</a>
<svg style="left:21.5px;top:282.8px" width="11.6" height="11.6" viewBox="0 0 12 12"><path d="M1 2.4 H11" stroke="#1a7ccc" stroke-width="1.1"/><rect x="1" y="4.8" width="10" height="5" rx=".8" fill="none" stroke="#1a7ccc" stroke-width="1"/></svg><a style="top:284.2px">Vessel Details</a>
<svg style="left:21.5px;top:317.4px" width="11.6" height="11.6" viewBox="0 0 12 12"><rect x="3" y="0.8" width="6.4" height="10.6" rx="3.2" fill="none" stroke="#1a7ccc" stroke-width="1"/><path d="M6.2 0.8 V4.6" stroke="#1a7ccc" stroke-width=".9"/></svg><a style="top:318.8px">Mousepad</a>
<svg style="left:21.5px;top:353.4px" width="11.6" height="11.6" viewBox="0 0 12 12"><rect x="0.8" y="0.8" width="10.4" height="10.4" rx=".8" fill="#1a7ccc"/><path d="M3.4 2.2 V6 M6 2.2 V5 M8.6 2.2 V6" stroke="#fff" stroke-width="1.2"/></svg><a style="top:354.8px">Vessel Management</a>
<svg style="left:21.5px;top:373.2px" width="11.6" height="11.6" viewBox="0 0 12 12"><circle cx="6" cy="6" r="5.1" fill="none" stroke="#1a7ccc" stroke-width="1"/><path d="M6 3.2 V8.8 M3.2 6 H8.8" stroke="#1a7ccc" stroke-width="1"/></svg><a style="top:374.6px">Add Fleet</a>
<svg style="left:21.5px;top:393.2px" width="11.6" height="11.6" viewBox="0 0 12 12"><circle cx="6" cy="6" r="4" fill="none" stroke="#1a7ccc" stroke-width="1.35"/><path d="M6 0.3 V2 M6 10 V11.7 M0.3 6 H2 M10 6 H11.7 M2 2 L3.2 3.2 M8.8 8.8 L10 10 M2 10 L3.2 8.8 M8.8 3.2 L10 2" stroke="#1a7ccc" stroke-width="1.5"/><path d="M2.4 6 H9.6 M6 6 L3.8 2.8 M6 6 L3.8 9.2" stroke="#1a7ccc" stroke-width=".9"/></svg><a style="top:394.6px">IT Admin</a>
<svg style="left:21.5px;top:413.2px" width="11.6" height="11.6" viewBox="0 0 12 12"><path d="M7 2 H3 A1.8 1.8 0 0 0 1.2 3.8 V9 A1.8 1.8 0 0 0 3 10.8 H8.2 A1.8 1.8 0 0 0 10 9 V5.2" fill="none" stroke="#1a7ccc" stroke-width="1"/><circle cx="9.6" cy="2.4" r="1.9" fill="#1a7ccc"/></svg><a style="top:414.6px">Notification Report</a>
<hr style="top:154.5px">
<hr style="top:210.9px">
<hr style="top:307.0px">
<hr style="top:341.9px">
</div>
<div class="abs" style="left:1902px;top:127px;width:2px;height:583px;background:#f7f7f7"></div>
<div id="redbox"></div>
</body></html>
